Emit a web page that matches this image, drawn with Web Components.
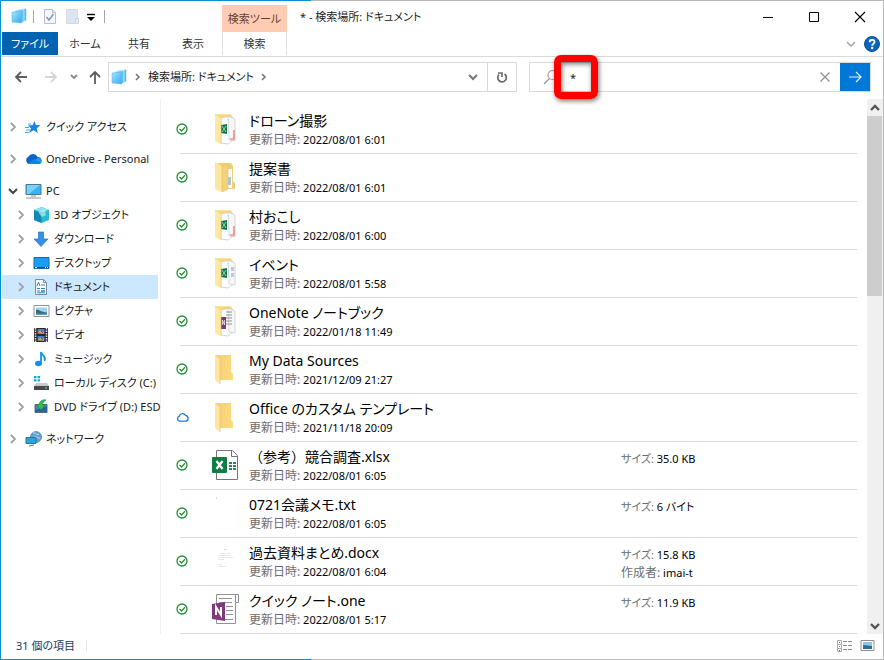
<!DOCTYPE html>
<html lang="ja">
<head>
<meta charset="utf-8">
<title>* - 検索場所: ドキュメント</title>
<style>
html, body { height: 100%; }
body {
  margin: 0; background: #fff; color: #191919;
  font: 11px/18px "Noto Sans", "Noto Sans CJK JP", sans-serif;
  font-feature-settings: "palt";
}
</style>
</head>
<body>
<explorer-window></explorer-window>
<script>
const chev = (d, c, w = 2) => `<svg width="12" height="12" viewBox="0 0 12 12"><path d="${d}" fill="none" stroke="${c}" stroke-width="${w}"/></svg>`;
const svg = (w, h, body) => `<svg width="${w}" height="${h}" viewBox="0 0 ${w} ${h}">${body}</svg>`;
const folderBack = '<path d="M3 2h16l2 3v23H3z" fill="#ffe391"/><path d="M4 3h15v25H4z" fill="#f7d57b"/>';
const folderFront = '<path d="M3 2l6 4v26l-6-3z" fill="#ffe8a3"/><path d="M3 2l6 4v26" fill="none" stroke="#f2d27b" stroke-width=".6"/>';
const sheets = '<path d="M9 6l9-2 3 3v21l-5 4-7-1z" fill="#fff" stroke="#c9c9c9" stroke-width=".8"/><path d="M16 4l7 3v22l-6-1z" fill="#f7f7f7" stroke="#ccc" stroke-width=".8"/>';
const sheetFolder = extra => svg(26, 34, folderBack + sheets + extra + folderFront);
const stack = '<path d="M6.500 1.500l9-1v12l-2 1z" fill="#4db9ee" stroke="#e6f8ff" stroke-width=".7"/><path d="M4 2.500l9-1v12.500l-3 .500z" fill="#62c4f3" stroke="#e6f8ff" stroke-width=".7"/><path d="M1 4l9.500-1v12L1 14z" fill="url(#sg)" stroke="#4fb2e6" stroke-width=".5"/><defs><linearGradient id="sg" x2="1" y2="1"><stop stop-color="#a8e4ff"/><stop offset="1" stop-color="#35acee"/></linearGradient></defs>';

const ICONS = {
  stack: svg(17, 17, stack),
  check: svg(14, 17, '<path d="M1.500 1.500h8l3 3v11h-11z" fill="#f3f6fb" stroke="#b5bfd0"/><path d="M9.500 1.500v3h3" fill="#dde4ef" stroke="#b5bfd0"/><path d="M3.500 9l2.500 3 4.500-6" fill="none" stroke="#8298bb" stroke-width="1.500"/>'),
  newfolder: svg(15, 17, '<path d="M1.500 1.500h11v8l1 1v5h-12z" fill="#dde5f0" stroke="#cfd9e7"/><path d="M10.500 14.500v-4h3" fill="#edf2f8" stroke="#c6d1e1"/>'),
  drop: svg(12, 12, '<path d="M2 3.500h8" stroke="#000" stroke-width="1.400"/><path d="M2 6h8L6 10z" fill="#000"/>'),
  back: svg(14, 14, '<path d="M13 7H2M7 2L2 7l5 5" fill="none" stroke="#5d5d5d" stroke-width="1.800"/>'),
  forward: svg(14, 14, '<path d="M1 7h11M7 2l5 5-5 5" fill="none" stroke="#d5d5d5" stroke-width="1.800"/>'),
  up: svg(14, 14, '<path d="M7 14V2M2 7l5-5 5 5" fill="none" stroke="#5d5d5d" stroke-width="1.800"/>'),
  down: chev('M2 4l4 4 4-4', '#777'),
  downdark: chev('M2 4l4 4 4-4', '#444'),
  downthin: chev('M2 4l4 4 4-4', '#a5a5a5', 1.5),
  right: chev('M4 2l4 4-4 4', '#a2a2a2', 1.8),
  rightdark: chev('M4 3l3 3-3 3', '#777', 1.6),
  smalldown: chev('M3 4l3 3 3-3', '#888', 1.8),
  scrolldown: chev('M2 4l4 4 4-4', '#555', 2.4),
  scrollup: chev('M2 8l4-4 4 4', '#555', 2.4),
  refresh: svg(14, 14, '<path d="M9.500 4A4.300 4.300 0 1 1 4 4.500M3 3h4v4" fill="none" stroke="#696969" stroke-width="1.700"/>'),
  mag: svg(16, 16, '<circle cx="9.500" cy="6" r="4.500" fill="none" stroke="#b39aa6" stroke-width="1.200"/><path d="M6.500 9.500L1 15" stroke="#8b95a8" stroke-width="1.300"/>'),
  clear: svg(12, 12, '<path d="M1.500 1.500l9 9M10.500 1.500l-9 9" stroke="#928a9b" stroke-width="1.200"/>'),
  go: svg(14, 14, '<path d="M1 7h12M8 2l5 5-5 5" fill="none" stroke="#e3f1ff" stroke-width="1.200"/>'),
  min: svg(12, 12, '<path d="M1 6.500h10" stroke="#000"/>'),
  max: svg(12, 12, '<path d="M1.500 1.500h9v9h-9z" fill="none" stroke="#000"/>'),
  close: svg(12, 12, '<path d="M1 1l10 10M11 1L1 11" stroke="#000" stroke-width="1.100"/>'),
  help: svg(16, 16, '<circle cx="8" cy="8" r="7.500" fill="#0a66bd" stroke="#0b4f96"/><path d="M5.700 6.200c0-3.200 4.800-3.100 4.800-.300 0 1.900-2.300 1.800-2.300 3.800" fill="none" stroke="#fff" stroke-width="1.900"/><circle cx="8.200" cy="12" r="1.200" fill="#fff"/>'),
  star: svg(16, 16, '<path d="M9.500 2l1.400 4 4.600.3-3.800 2.900 1.100 4.800-4.300-2.700L4 14l2-4.800L3 6.500l4.700-.5z" fill="#1b86d8"/><path d="M0 8.500h4M1 11h4M0 13.500h4M3 5h3" stroke="#4aa8e8"/>'),
  cloud: svg(17, 16, '<path d="M4 13a4 4 0 0 1-.500-7.500A5 5 0 0 1 12.500 6 3.600 3.600 0 0 1 14 13z" fill="#0a66c2"/><path d="M4 13l9-6c5 0 4.500 6 1 6z" fill="#2c9cf0"/><path d="M3 12.600L9 8l7 3.500-2 1.500H4z" fill="#1482dc"/>'),
  pc: svg(17, 16, '<path d="M1 1.500h15v10H1z" fill="#35b3f4" stroke="#5d7480"/><path d="M2 2h13L4 11H2z" fill="#79d2fb"/><path d="M6 13h5M1 15h15" stroke="#8397a4"/>'),
  cube: svg(17, 16, '<path d="M1 3l7.500-3L16 3v10l-7.500 3L1 13z" fill="#27bad1"/><path d="M1 3l7.500 2v11L1 13z" fill="#1487b5"/><path d="M1 3l7.500-3L16 3 8.500 5z" fill="#8ce3ed"/><path d="M5 4.500l7.500-2v6L8.500 10z" fill="#c0f3f6" opacity=".65"/>'),
  dl: svg(16, 16, '<path d="M5.500 1h5v7H15l-7 7.500L1 8h4.500z" fill="#388fe5" stroke="#2475bd" stroke-width=".7"/>'),
  desk: svg(17, 16, '<path d="M1 2.500h15v11H1z" fill="#1b9df5" stroke="#126aa8"/><path d="M1 12.500h15" stroke="#0c4572"/><path d="M2 12.500h2M12 12.500h1M14 12.500h1" stroke="#fff"/>'),
  doc: svg(16, 16, '<path d="M2.500.500h8l3 3v12h-11z" fill="#fff" stroke="#7f8b92"/><path d="M10.500.500v3h3" fill="none" stroke="#7f8b92"/><path d="M4 7l1.500-4L7 7M4 9.500h3M8 9.500h4M8 6h4M4 12h3M4 13.800h8" stroke="#2688cf" fill="none"/><path d="M8 11h4v2H8z" fill="#54a7d8"/>'),
  pic: svg(17, 16, '<path d="M1 2.500h15v11H1z" fill="#fff" stroke="#8e9498"/><path d="M3 4.500h11v7H3z" fill="#9ed3f3"/><path d="M3 7c3-1 4 2 11 2.500v2H3z" fill="#3a6b7b"/><path d="M3 10h11v1.500H3z" fill="#3b82ad"/>'),
  film: svg(16, 16, '<path d="M1 1h14v14H1z" fill="#282828"/><path d="M2.500 1v14M13.500 1v14" stroke="#e4e4e4" stroke-width="1.500" stroke-dasharray="1.500 1"/><path d="M4.500 2h7v5h-7z" fill="#457fca"/><path d="M4.500 9h7v5h-7z" fill="#457fca"/><path d="M5 6l2-3 2 2 2-1v3M5 13l2-3 2 2 2-1v3" fill="#d6a43a"/><path d="M8 4l2 2M8 11l2 2" stroke="#ad3a3a"/>'),
  note: svg(16, 16, '<ellipse cx="5.500" cy="12.500" rx="3.500" ry="2.800" fill="#1094e8"/><path d="M8 13V1c1 3.500 5.500 4 3.500 9" fill="none" stroke="#1094e8" stroke-width="1.800"/>'),
  disk: svg(17, 16, '<path d="M1 1h2.500v2.300H1zM4.500 1H7v2.300H4.500zM1 4.300h2.500v2.300H1zM4.500 4.300H7v2.300H4.500z" fill="#14a9dd"/><path d="M3 8h11l2 3H1z" fill="#c7c9ca"/><path d="M1 11h15v4H1z" fill="#464a4d"/><path d="M12 13h2" stroke="#6fe37e"/>'),
  dvd: svg(16, 16, '<path d="M2 5.500h12v8H2z" fill="#3b88bd" stroke="#5a6772"/><path d="M2 11l12-4v6H2z" fill="#2c6597"/><path d="M13 1C9 0 6 3 6 6H3.500L8 11l4-5H9.500C9.500 4 11 2 13 1z" fill="#2fc24f" stroke="#168534" stroke-width=".5"/>'),
  net: svg(17, 16, '<circle cx="11" cy="6" r="5.500" fill="#5fa3d0" stroke="#4380ab" stroke-width=".7"/><path d="M8 2c3-1 3 3 6 1M9 6c3-1 4 2 6 1" stroke="#c4e4f5" fill="none"/><path d="M1 6.500h10v6H1z" fill="#27a5e8" stroke="#346e91"/><path d="M4 15l5-1" stroke="#577a90"/>'),
  ok: svg(12, 12, '<circle cx="6" cy="6" r="5" fill="none" stroke="#249038" stroke-width="1.300"/><path d="M3.500 6l2 2 3.500-3.700" fill="none" stroke="#249038" stroke-width="1.300"/>'),
  oncloud: svg(13, 12, '<path d="M3.500 10.200a2.600 2.600 0 0 1-.200-5A3.300 3.300 0 0 1 9.500 4.500a2.900 2.900 0 0 1 .400 5.700z" fill="none" stroke="#1c7ed6" stroke-width="1.300"/>'),
  fxl: sheetFolder('<path d="M9 13l6-1v10l-6-1z" fill="#12784a"/><path d="M10 14l4 6M14 14l-4 6" stroke="#b9e4cc" stroke-width=".8"/><path d="M22 18v9M18 27h5" stroke="#de7359" stroke-width="1.200"/>'),
  fev: sheetFolder('<path d="M9 13l6-1v10l-6-1z" fill="#12784a"/><path d="M10 14l4 6M14 14l-4 6" stroke="#b9e4cc" stroke-width=".8"/><path d="M19 12h3M19 14h3M19 18h3M19 20h3" stroke="#69a3dc"/>'),
  fon: sheetFolder('<path d="M14 8h6M14 11h6M14 14h6M14 17h6M14 20h6" stroke="#919191"/><path d="M9 13h5v12H9z" fill="#7e3878"/><path d="M10.500 21v-5l2 5v-5" fill="none" stroke="#fff" stroke-width=".7"/>'),
  ftx: svg(26, 34, '<path d="M4 3h15l2 3v15l2 2v6H4z" fill="#f1ce75"/><path d="M15 9h5v19h-5z" fill="#fff"/><path d="M16 20h3M16 22h3M16 18h3M16 24h3" stroke="#4d8fc5"/><path d="M3 2l7 4v26l-7-3z" fill="#ffe69f"/><path d="M10 6l6-2v25l-6 3z" fill="#f4d27c" stroke="#e6bd61" stroke-width=".6"/>'),
  folder: svg(26, 34, '<path d="M3 3h16v17l2 2v6H6z" fill="url(#fg)"/><path d="M3 3l5 4v25l-5-4z" fill="#ffe69c"/><path d="M8 7v25" stroke="#edc66a" stroke-width=".7"/><defs><linearGradient id="fg"><stop stop-color="#f1cc73"/><stop offset="1" stop-color="#ffdb80"/></linearGradient></defs>'),
  xlsx: svg(30, 32, '<path d="M6.500 1.500h16l5 5v24h-21z" fill="#fff" stroke="#757575"/><path d="M21.500 1.500v6h6" fill="none" stroke="#757575"/><path d="M19 14h3M23 14h3M19 17h3M23 17h3M19 20h3M23 20h3" stroke="#23875a" stroke-width="2"/><rect x="2" y="8" width="15" height="16" rx="1" fill="#107c41"/><path d="M6.500 12l6 8M12.500 12l-6 8" stroke="#fff" stroke-width="2.200"/>'),
  txt: svg(30, 34, '<path d="M6 2h1" stroke="#bbb"/><path d="M28 4v28H6" stroke="#fafafa" fill="none"/>'),
  docx: svg(30, 34, '<path d="M10 9.500h5M16 9.500h4M8 11.500h13M8 13.500h15M8 15.500h6M9 20.500h3M9 22.500h7" stroke="#e8e8e8" fill="none"/><path d="M14 5.500h3" stroke="#ddd"/>'),
  one: svg(30, 32, '<path d="M6.500 1.500h22v8h-3v21h-19z" fill="#fff" stroke="#929292"/><path d="M25.500 2v7" stroke="#929292"/><path d="M9 5.500h13M9 9.500h13M16 13.500h7M16 17.500h7M16 21.500h7M9 26.500h14" stroke="#929292"/><path d="M2 11l13-2v19L2 26z" fill="#80397b"/><path d="M6 22v-8l5 8v-8" fill="none" stroke="#fff" stroke-width="2"/>'),
  vdetails: svg(17, 14, '<path d="M1.500 1.500h4v4h-4zM1.500 5.500h4v4h-4zM1.500 9.500h4v3h-4z" fill="none" stroke="#aaa"/><path d="M3 3.500h1" stroke="#777"/><path d="M3 7.500h1" stroke="#3189da"/><path d="M3 11.500h1" stroke="#c23b4b"/><path d="M7 2.500h4M12 2.500h4M7 6.500h4M12 6.500h4M7 10.500h4M12 10.500h4" stroke="#888"/>'),
  vlarge: svg(15, 13, '<path d="M1 1.500h13v10H1z" fill="#fff" stroke="#8b8f93"/><path d="M3 3h9v7H3z" fill="#8cc7ef"/><path d="M3 6c3 0 5 1 9 1v3H3z" fill="#2e6d8f"/>')
};

const BASE = `*{box-sizing:border-box}
button,input{font:inherit;font-feature-settings:inherit;color:inherit;background:none;border:0;padding:0;margin:0}
button{display:flex;align-items:center;justify-content:center}
a{color:inherit;text-decoration:none}svg{display:block}`;

function define(name, render) {
  customElements.define(name, class extends HTMLElement {
    connectedCallback() {
      if (this.shadowRoot) return;
      const t = document.createElement('template');
      const [css, html] = render(this);
      t.innerHTML = `<style>${BASE}${css}</style>${html}`;
      this.attachShadow({ mode: 'open' }).append(t.content.cloneNode(true));
    }
  });
}
const ic = n => `<ui-icon name="${n}"></ui-icon>`;

define('ui-icon', el => [':host{display:block;flex:none}', ICONS[el.getAttribute('name')] || '']);

define('title-bar', () => [`
:host{display:flex;height:31px}
.quick{display:flex;align-items:center;width:221px;padding-left:10px}
.quick button{width:22px}.quick .d{width:16px}
i{width:1px;height:13px;background:#a5a5a5;margin:0 5px}
.ctx{width:65px;margin-top:4px;background:#ffccb3;color:#5c4135;text-align:center;line-height:27px}
h1{font:inherit;margin:0;flex:1;padding-left:13px;line-height:31px;color:#222}
.win{display:flex}.win button{width:46px}`,
`<div class="quick">${ic('stack')}<i></i>
<button aria-label="プロパティ">${ic('check')}</button><button aria-label="新しいフォルダー">${ic('newfolder')}</button>
<button class="d" aria-label="カスタマイズ">${ic('drop')}</button><i></i></div>
<div class="ctx">検索ツール</div><h1>* - 検索場所: ドキュメント</h1>
<div class="win"><button aria-label="最小化">${ic('min')}</button><button aria-label="最大化">${ic('max')}</button><button aria-label="閉じる">${ic('close')}</button></div>`]);

define('ribbon-tabs', () => [`
:host{display:flex;height:25px;border-bottom:1px solid #dadada;padding:0 0 0 1px;align-items:flex-start}
button{width:54px;height:23px;color:#333}
.file{width:56px;background:#0063b1;color:#fff}
.on{width:65px;margin-left:2px;border:solid #e1e1e1;border-width:0 1px}
.sp{flex:1}.b{width:20px}.h{width:22px}`,
`<button class="file">ファイル</button><button>ホーム</button><button>共有</button><button>表示</button><button class="on">検索</button>
<span class="sp"></span><button class="b" aria-label="リボンの展開">${ic('downthin')}</button><button class="h" aria-label="ヘルプ">${ic('help')}</button>`]);

define('address-row', () => [`
:host{display:flex;height:42px;padding:5px 12px 7px 5px;align-items:stretch}
.nav{display:flex}.nav button{width:30px}.nav .s{width:16px}.nav .u{width:26px}
.addr{flex:404;display:flex;align-items:center;border:1px solid #d9d9d9;padding-left:2px}
.addr .c{margin:0 4px}
.addr .t{flex:1;display:flex;align-items:center}
.addr button{align-self:stretch;width:29px}
.addr .r{border-left:1px solid #d9d9d9}
search-box{flex:326;margin-left:12px}`,
`<div class="nav"><button aria-label="戻る">${ic('back')}</button><button aria-label="進む">${ic('forward')}</button><button class="s" aria-label="履歴">${ic('smalldown')}</button><button class="u" aria-label="上へ">${ic('up')}</button></div>
<div class="addr">${ic('stack')}<span class="c">${ic('rightdark')}</span><div class="t"><a href="#">検索場所: ドキュメント</a><span class="c">${ic('rightdark')}</span></div>
<button aria-label="以前の場所">${ic('down')}</button><button class="r" aria-label="更新">${ic('refresh')}</button></div>
<search-box></search-box>`]);

define('search-box', () => [`
:host{display:flex;position:relative;align-items:center;border:1px solid #d9d9d9;padding-left:13px}
input{flex:1;min-width:0;padding-left:11px;outline:0;height:28px}
button{align-self:stretch;width:30px}.go{background:#0078d7}
.mark{position:absolute;left:24px;top:-8px;width:44px;height:44px;border:7px solid #f00;border-radius:7px;pointer-events:none;box-shadow:1px 2px 5px #0008,inset 1px 2px 5px #0008}`,
`${ic('mag')}<input type="text" aria-label="検索" value="*"><button aria-label="クリア">${ic('clear')}</button><button class="go" aria-label="検索の実行">${ic('go')}</button><span class="mark"></span>`]);

define('nav-item', el => [`
:host{display:flex;align-items:center;height:24px;padding-left:4px;white-space:nowrap}
:host([child]){padding-left:12px}:host([gap]){margin-top:8px}
:host([on]){background:#cce8ff}
button{width:13px;height:24px;flex:none}
.i{width:17px;margin:0 4px 0 6px;flex:none}`,
`<button aria-label="展開">${ic(el.hasAttribute('open') ? 'downdark' : 'right')}</button><span class="i">${ic(el.getAttribute('icon'))}</span><a href="#"><slot></slot></a>`]);

define('file-row', el => {
  const a = n => el.getAttribute(n) || '';
  return [`
:host{display:grid;grid-template-columns:69px minmax(0,1fr) 236px;height:48px;border-bottom:1px solid #dadada;flex:none}
.ico{display:grid;grid-template-columns:27px 44px;align-items:center;margin-left:-4px;padding-bottom:1px}
.ico>:last-child{justify-self:center}
.m{padding-top:5px}.name{display:block;font-size:14px;line-height:20px;color:#000}
.full{font-feature-settings:normal}
.s{padding-top:8px}
.k{color:#6d6d6d;font-size:12px}.kana{font-size:11px}.v{color:#000}p{margin:0;line-height:18px}`,
`<div class="ico">${ic(a('cloud') ? 'oncloud' : 'ok')}${ic(a('icon'))}</div>
<div class="m"><a class="name${a('name')[0] === '（' ? ' full' : ''}" href="#">${a('name')}</a><p><span class="k">更新日時:</span> <span class="v">${a('date')}</span></p></div>
<div class="s">${a('size') ? `<p><span class="k kana">サイズ:</span> <span class="v">${a('size')}</span></p>` : ''}${a('author') ? `<p><span class="k">作成者:</span> <span class="v">${a('author')}</span></p>` : ''}</div>`];
});

define('scroll-bar', () => [`
:host{display:flex;flex-direction:column;width:16px;background:#f0f0f0}
button{height:17px}.track{flex:1}.thumb{height:36%;background:#cdcdcd;margin-right:1px}`,
`<button aria-label="上へスクロール">${ic('scrollup')}</button><div class="track"><div class="thumb"></div></div><button aria-label="下へスクロール">${ic('scrolldown')}</button>`]);

const NAV = [
  ['star', 'クイック アクセス', ''], ['cloud', 'OneDrive - Personal', 'gap'], ['pc', 'PC', 'gap open'],
  ['cube', '3D オブジェクト', 'child'], ['dl', 'ダウンロード', 'child'], ['desk', 'デスクトップ', 'child'],
  ['doc', 'ドキュメント', 'child on'], ['pic', 'ピクチャ', 'child'], ['film', 'ビデオ', 'child'],
  ['note', 'ミュージック', 'child'], ['disk', 'ローカル ディスク (C:)', 'child'], ['dvd', 'DVD ドライブ (D:) ESD', 'child'],
  ['net', 'ネットワーク', 'gap']];
const FILES = [
  ['fxl', 'ドローン撮影', '2022/08/01 6:01'], ['ftx', '提案書', '2022/08/01 6:01'], ['fxl', '村おこし', '2022/08/01 6:00'],
  ['fev', 'イベント', '2022/08/01 5:58'], ['fon', 'OneNote ノートブック', '2022/01/18 11:49'],
  ['folder', 'My Data Sources', '2021/12/09 21:27'], ['folder', 'Office のカスタム テンプレート', '2021/11/18 20:09', '', '', 1],
  ['xlsx', '（参考）競合調査.xlsx', '2022/08/01 6:05', '35.0 KB'], ['txt', '0721会議メモ.txt', '2022/08/01 6:05', '6 バイト'],
  ['docx', '過去資料まとめ.docx', '2022/08/01 6:04', '15.8 KB', 'imai-t'], ['one', 'クイック ノート.one', '2022/08/01 5:17', '11.9 KB']];

define('explorer-window', () => [`
:host{display:flex;flex-direction:column;box-sizing:border-box;min-height:100vh;border:1px solid #0a8fd0;
border-image:linear-gradient(90deg,#0a8fd0 311px,#b9b9b9 311px) 1}
.body{flex:1;display:flex;min-height:0}
nav{width:160px;border-right:1px solid #f0f0f0;padding:16px 2px 0 1px}
main{flex:1;min-width:0;display:flex;flex-direction:column;padding:7px 10px 0 19px}
footer{display:flex;align-items:center;height:25px;padding:0 8px 2px 15px;color:#1e395b}
footer i{width:1px;height:11px;background:#e5e5e5;margin-left:11px}.sp{flex:1}footer button{margin-left:7px}`,
`<title-bar></title-bar><ribbon-tabs></ribbon-tabs><address-row></address-row>
<div class="body"><nav aria-label="フォルダー">${NAV.map(([i, t, f]) => `<nav-item icon="${i}" ${f}>${t}</nav-item>`).join('')}</nav>
<main>${FILES.map(([i, n, d, s = '', au = '', c = '']) => `<file-row icon="${i}" name="${n}" date="${d}" size="${s}" author="${au}" cloud="${c}"></file-row>`).join('')}</main>
<scroll-bar></scroll-bar></div>
<footer><span>31 個の項目</span><i></i><span class="sp"></span><button aria-label="詳細表示">${ic('vdetails')}</button><button aria-label="大アイコン表示">${ic('vlarge')}</button></footer>`]);
</script>
</body>
</html>
